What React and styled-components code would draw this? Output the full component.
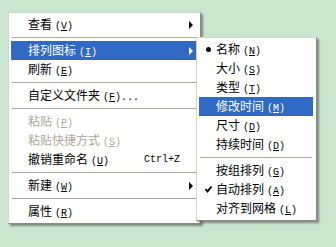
import styled, { createGlobalStyle } from "styled-components";

const GlobalStyle = createGlobalStyle`
  html, body {
    margin: 0;
    padding: 0;
    background: #cbe6cf;
  }
  body {
    font-family: "Noto Sans CJK SC", "Liberation Sans", sans-serif;
  }
`;

const Desktop = styled.div`
  width: 336px;
  height: 247px;
  padding: 12px 0 0 8px;
  box-sizing: border-box;
  background: #cbe6cf;
`;

const Menu = styled.ul`
  list-style: none;
  margin: 0;
  padding: 2px 3px 2px 2px;
  width: ${(p) => p.$width}px;
  box-sizing: border-box;
  background: #fff;
  border: 1px solid #d6d3cc;
  border-right-color: #8f8c85;
  border-bottom-color: #8f8c85;
  box-shadow: 2px 2px 2px rgba(60, 60, 60, 0.55);
`;

const SubMenu = styled(Menu)`
  position: absolute;
  left: calc(100% - 1px);
  top: -4px;
  z-index: 2;
`;

const Item = styled.li`
  position: relative;
  display: flex;
  align-items: center;
  height: 19px;
  padding: 0 4px 0 17px;
  font-size: 12px;
  line-height: 19px;
  white-space: nowrap;
  color: ${(p) => (p.$active ? "#fff" : p.$disabled ? "#aca899" : "#000")};
  background: ${(p) => (p.$active ? "#316ac5" : "transparent")};
`;

const Label = styled.span`
  flex: 1;
`;

const Key = styled.span`
  font-family: "Liberation Mono", monospace;
  font-size: 10px;
  margin-left: 3px;

  u {
    text-decoration-thickness: 1px;
    text-underline-offset: 1px;
  }
`;

const Shortcut = styled.span`
  font-family: "Liberation Mono", monospace;
  font-size: 10px;
  margin-right: 13px;
`;

const Arrow = styled.span`
  width: 0;
  height: 0;
  border-top: 4px solid transparent;
  border-bottom: 4px solid transparent;
  border-left: 4px solid ${(p) => (p.$active ? "#fff" : "#000")};
`;

const Mark = styled.span`
  position: absolute;
  left: 4px;
  top: 0;
  height: 19px;
  width: 11px;
  display: flex;
  align-items: center;
  justify-content: center;
`;

const Dot = styled.span`
  width: 5px;
  height: 5px;
  border-radius: 50%;
  background: #000;
`;

const Separator = styled.li`
  height: 7px;
  display: flex;
  align-items: center;
  padding: 0 1px;

  &::after {
    content: "";
    flex: 1;
    height: 0;
    border-top: 1px solid #aca899;
  }
`;

const Check = () => (
  <svg width="9" height="9" viewBox="0 0 9 9">
    <path d="M1.5 4 L3.5 6.5 L7.5 1.5" stroke="#000" strokeWidth="2" fill="none" />
  </svg>
);

const Entry = ({ label, k, suffix, arrow, active, disabled, shortcut, mark, children }) => (
  <Item $active={active} $disabled={disabled}>
    {mark === "dot" && (
      <Mark>
        <Dot />
      </Mark>
    )}
    {mark === "check" && (
      <Mark>
        <Check />
      </Mark>
    )}
    <Label>
      {label}
      <Key>
        (<u>{k}</u>){suffix}
      </Key>
    </Label>
    {shortcut && <Shortcut>{shortcut}</Shortcut>}
    {arrow && <Arrow $active={active} />}
    {children}
  </Item>
);

export default function App() {
  return (
    <>
      <GlobalStyle />
      <Desktop>
        <Menu $width={193}>
          <Entry label="查看" k="V" arrow />
          <Separator />
          <Entry label="排列图标" k="I" arrow active>
            <SubMenu $width={121}>
              <Entry label="名称" k="N" mark="dot" />
              <Entry label="大小" k="S" />
              <Entry label="类型" k="T" />
              <Entry label="修改时间" k="M" active />
              <Entry label="尺寸" k="D" />
              <Entry label="持续时间" k="D" />
              <Separator />
              <Entry label="按组排列" k="G" />
              <Entry label="自动排列" k="A" mark="check" />
              <Entry label="对齐到网格" k="L" />
            </SubMenu>
          </Entry>
          <Entry label="刷新" k="E" />
          <Separator />
          <Entry label="自定义文件夹" k="F" suffix="..." />
          <Separator />
          <Entry label="粘贴" k="P" disabled />
          <Entry label="粘贴快捷方式" k="S" disabled />
          <Entry label="撤销重命名" k="U" shortcut="Ctrl+Z" />
          <Separator />
          <Entry label="新建" k="W" arrow />
          <Separator />
          <Entry label="属性" k="R" />
        </Menu>
      </Desktop>
    </>
  );
}
